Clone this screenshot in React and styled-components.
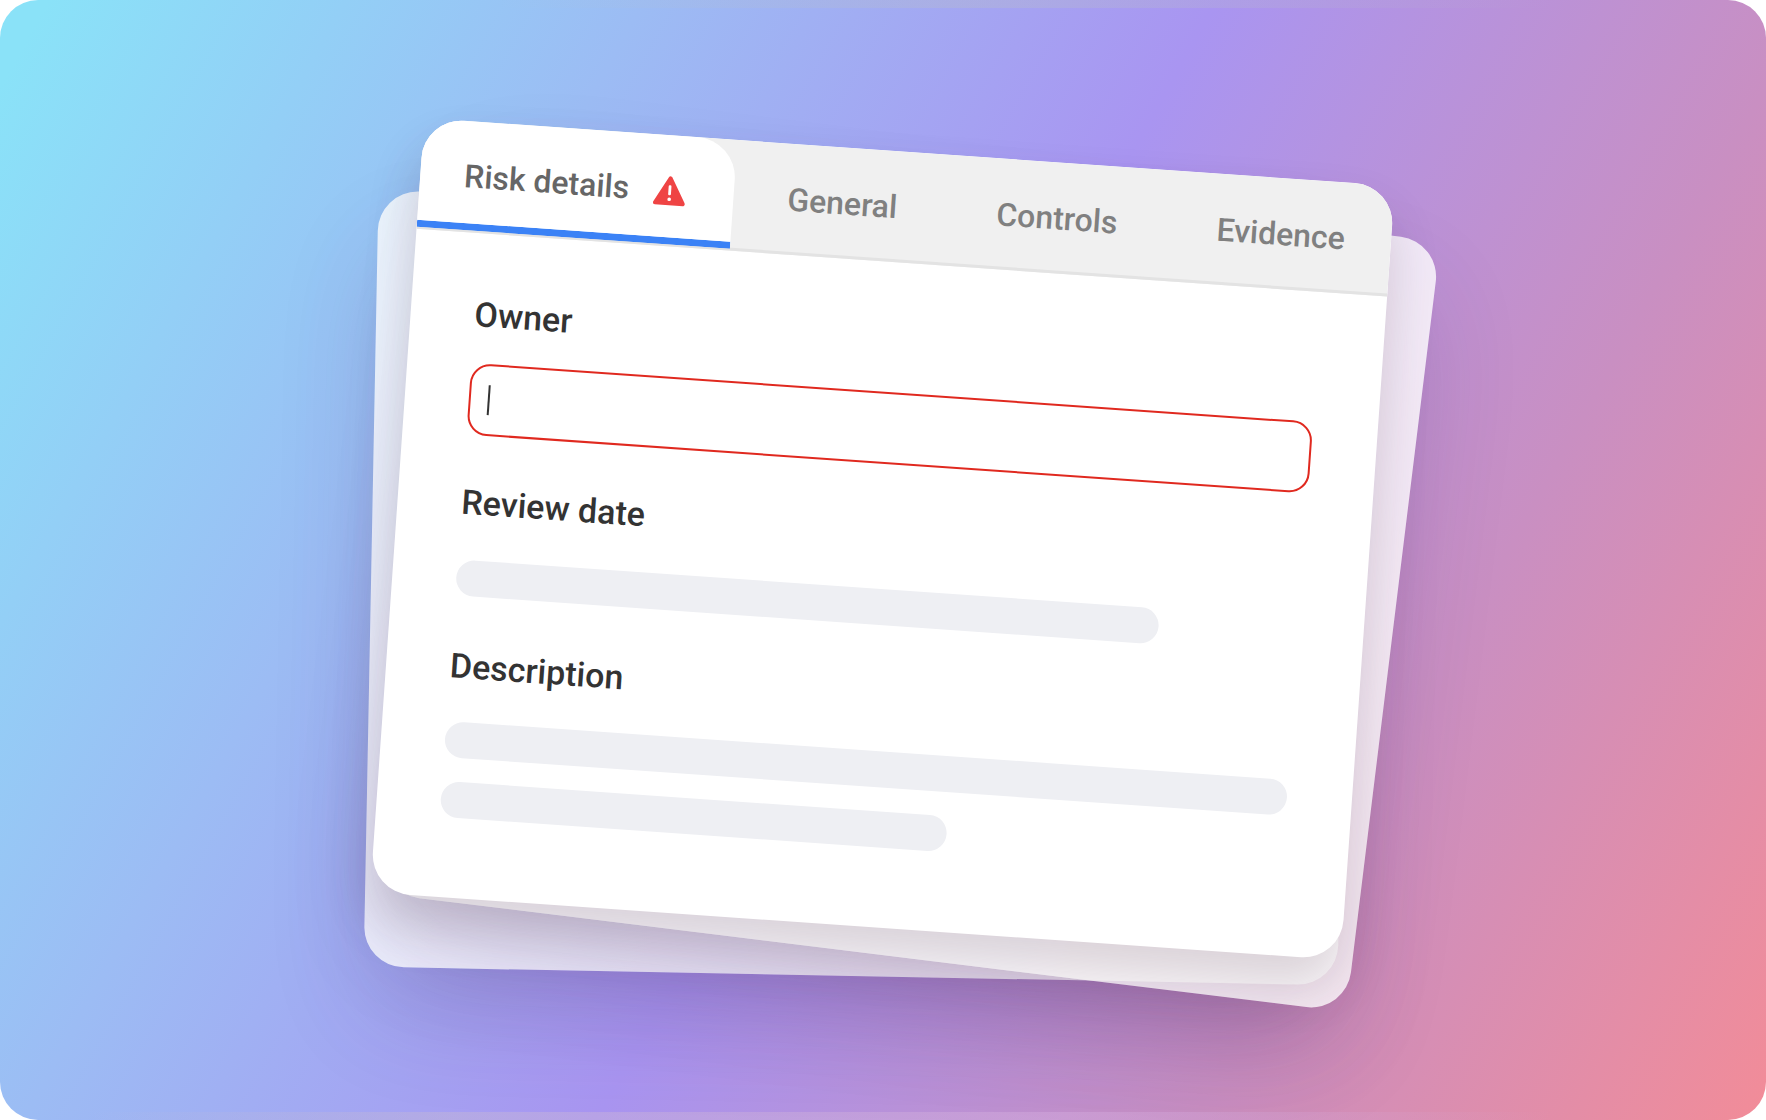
import React from 'react'
import styled, { createGlobalStyle } from 'styled-components'

const GlobalStyle = createGlobalStyle`
  html, body {
    margin: 0;
    padding: 0;
    background: #fff;
    font-family: Roboto, "Liberation Sans", sans-serif;
  }
`

const Frame = styled.div`
  position: relative;
  width: 1766px;
  height: 1120px;
  border-radius: 38px;
  overflow: hidden;
  display: grid;
  place-items: center;
  background: linear-gradient(119deg, #8ae2f8 2%, #9cbcf4 27%, #a995f1 51%, #c98fc2 76%, #f28c98 100%);

  /* faint lighter strips along the top and bottom edge */
  &::before,
  &::after {
    content: '';
    position: absolute;
    left: 0;
    right: 0;
    height: 8px;
  }
  &::before {
    top: 0;
    background: linear-gradient(90deg, transparent 28%, rgba(190, 195, 190, 0.28) 55%, rgba(190, 195, 190, 0.2) 70%, transparent 88%);
  }
  &::after {
    bottom: 0;
    background: linear-gradient(90deg, transparent 5%, rgba(205, 190, 205, 0.35) 25%, rgba(215, 175, 225, 0.4) 60%, transparent 88%);
  }
`

const BackCard = styled.div`
  grid-area: 1 / 1;
  width: 974px;
  height: 776px;
  border-radius: 40px;
  background: rgba(255, 255, 255, 0.8);
  box-shadow: 0 50px 110px -14px rgba(70, 40, 100, 0.2);
  transform: translate(${p => p.$x}px, ${p => p.$y}px) rotate(${p => p.$angle}deg);
`

const Card = styled.div`
  grid-area: 1 / 1;
  width: 973px;
  height: 776px;
  border-radius: 40px;
  overflow: hidden;
  background: #fff;
  box-shadow: 0 30px 50px rgba(80, 50, 70, 0.2);
  transform: translate(-1px, -21px) rotate(4deg);
`

const TabBar = styled.div`
  display: flex;
  align-items: flex-start;
  height: 111px;
  box-sizing: border-box;
  background: #f0f0f0;
  border-bottom: 3px solid #e3e3e3;
`

const ActiveTab = styled.div`
  flex: none;
  width: 314px;
  height: 109px;
  box-sizing: border-box;
  display: flex;
  align-items: center;
  gap: 25px;
  padding: 8px 0 0 44px;
  background: #fff;
  border-bottom: 7px solid #3b82f6;
  border-radius: 0 40px 0 0;
  color: #666;
  font-size: 32px;
  font-weight: 500;
`

const Tabs = styled.div`
  height: 108px;
  box-sizing: border-box;
  display: flex;
  align-items: center;
  gap: 99.5px;
  padding: 4px 0 0 54px;
`

const Tab = styled.div`
  color: #808080;
  font-size: 32px;
  font-weight: 500;
`

const Body = styled.div`
  padding: 61px 62px 0 64px;
`

const Label = styled.div`
  height: 40px;
  line-height: 40px;
  color: #333;
  font-size: 34px;
  font-weight: 500;
  margin-bottom: ${p => p.$gap}px;
`

const Input = styled.div`
  box-sizing: border-box;
  width: 844px;
  height: 72px;
  margin-bottom: 47px;
  padding-left: 17px;
  display: flex;
  align-items: center;
  border: 2px solid #e0291f;
  border-radius: 20px;
`

const Caret = styled.span`
  display: block;
  width: 2px;
  height: 30px;
  background: #333;
`

const Skeleton = styled.div`
  width: ${p => p.$width}px;
  height: 36px;
  border-radius: 18px;
  background: #eeeff3;
  margin-bottom: ${p => p.$gap}px;
`

const WarningIcon = () => (
  <svg width="32" height="31" viewBox="0 0 32 31">
    <path d="M16 3 L30 28 L2 28 Z" fill="#ef4444" stroke="#ef4444" strokeWidth="4" strokeLinejoin="round" />
    <rect x="14.6" y="10" width="2.8" height="10" rx="1.2" fill="#fff" />
    <circle cx="16" cy="24" r="1.8" fill="#fff" />
  </svg>
)

export default function App() {
  return (
    <>
      <GlobalStyle />
      <Frame>
        <BackCard $x={-25} $y={28} $angle={1.1} />
        <BackCard $x={27} $y={7.5} $angle={7} />
        <Card>
          <TabBar>
            <ActiveTab>
              Risk details
              <WarningIcon />
            </ActiveTab>
            <Tabs>
              <Tab>General</Tab>
              <Tab>Controls</Tab>
              <Tab>Evidence</Tab>
            </Tabs>
          </TabBar>
          <Body>
            <Label $gap={29}>Owner</Label>
            <Input><Caret /></Input>
            <Label $gap={38}>Review date</Label>
            <Skeleton $width={704} $gap={50} />
            <Label $gap={36}>Description</Label>
            <Skeleton $width={844} $gap={24} />
            <Skeleton $width={507} $gap={0} />
          </Body>
        </Card>
      </Frame>
    </>
  )
}
